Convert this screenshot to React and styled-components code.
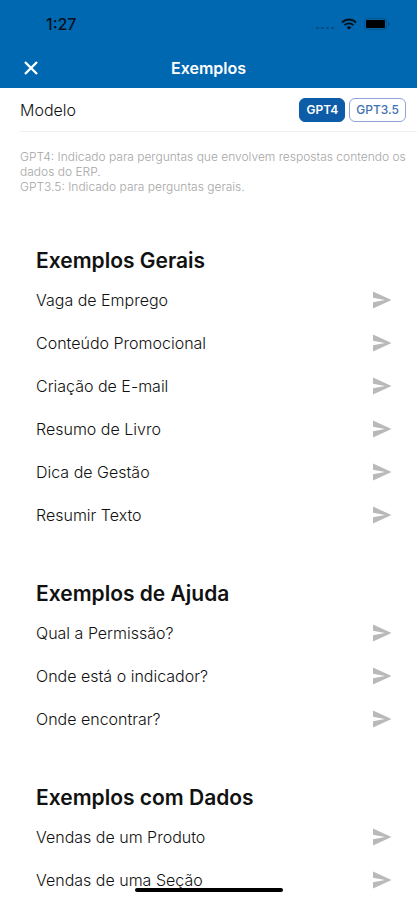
import React, { useState } from "react";
import styled, { createGlobalStyle } from "styled-components";

const GlobalStyle = createGlobalStyle`
  * {
    box-sizing: border-box;
  }

  body {
    margin: 0;
    background: #fff;
    color: #111;
    font-family: Inter, "Liberation Sans", sans-serif;
  }

  button {
    font-family: inherit;
    cursor: pointer;
  }
`;

const Screen = styled.div`
  display: flex;
  flex-direction: column;
  height: 100vh;
`;

const Header = styled.header`
  flex: none;
  background: #0067b1;
`;

const StatusBar = styled.div`
  display: flex;
  align-items: center;
  justify-content: space-between;
  height: 48px;
  padding: 0 27px 0 46px;
  color: #05121c;
`;

const Clock = styled.span`
  font-size: 16px;
  font-weight: 500;
  line-height: 20px;
`;

const StatusIcons = styled.div`
  display: flex;
  align-items: center;
  gap: 7px;

  svg {
    display: block;
  }
`;

const NavBar = styled.div`
  display: grid;
  grid-template-columns: 40px 1fr 40px;
  align-items: center;
  height: 40px;
  padding: 0 11px;
`;

const CloseButton = styled.button`
  display: flex;
  align-items: center;
  justify-content: center;
  height: 40px;
  padding: 0;
  border: none;
  background: none;
  color: #fff;
`;

const Title = styled.h1`
  margin: 0;
  color: #fff;
  font-size: 16px;
  font-weight: 600;
  line-height: 20px;
  text-align: center;
`;

const Content = styled.main`
  flex: 1;
  min-height: 0;
  overflow-y: auto;
  scrollbar-width: none;
`;

const ModelRow = styled.div`
  display: flex;
  align-items: center;
  justify-content: space-between;
  height: 44px;
  margin-left: 20px;
  padding-right: 11px;
  border-bottom: 1px solid #f1f1f1;
`;

const ModelLabel = styled.span`
  font-size: 16px;
  font-weight: 300;
  line-height: 20px;
  color: #111;
`;

const ModelOptions = styled.div`
  display: flex;
  gap: 4px;
`;

const ModelButton = styled.button`
  height: 24px;
  padding: 0 6px;
  border: 1px solid ${({ $active }) => ($active ? "#0d5ca8" : "#8fa3d4")};
  border-radius: 6px;
  background: ${({ $active }) => ($active ? "#0d5ca8" : "#fff")};
  color: ${({ $active }) => ($active ? "#fff" : "#4470b4")};
  font-size: 12px;
  font-weight: ${({ $active }) => ($active ? 600 : 500)};
  line-height: 20px;
`;

const Notes = styled.div`
  padding: 17px 11px 0 20px;
  color: #a6a6a6;
  font-size: 12px;
  font-weight: 300;
  line-height: 15px;

  p {
    margin: 0;
  }
`;

const Sections = styled.div`
  display: flex;
  flex-direction: column;
  gap: 43px;
  padding: 52px 25px 0 36px;
`;

const SectionTitle = styled.h2`
  margin: 0 0 2px;
  color: #111;
  font-size: 21px;
  font-weight: 600;
  line-height: 30px;
`;

const List = styled.ul`
  margin: 0;
  padding: 0;
  list-style: none;
`;

const ExampleButton = styled.button`
  display: flex;
  align-items: center;
  justify-content: space-between;
  width: 100%;
  height: 43px;
  padding: 0;
  border: none;
  background: none;
  color: #111;
  font-size: 16px;
  font-weight: 300;
  line-height: 20px;
  text-align: left;
`;

const HomeIndicator = styled.div`
  position: fixed;
  bottom: 8px;
  left: 50%;
  width: 148px;
  height: 4px;
  border-radius: 2px;
  background: #000;
  transform: translateX(-50%);
`;

const models = ["GPT4", "GPT3.5"];

const sections = [
  {
    title: "Exemplos Gerais",
    items: [
      "Vaga de Emprego",
      "Conteúdo Promocional",
      "Criação de E-mail",
      "Resumo de Livro",
      "Dica de Gestão",
      "Resumir Texto",
    ],
  },
  {
    title: "Exemplos de Ajuda",
    items: ["Qual a Permissão?", "Onde está o indicador?", "Onde encontrar?"],
  },
  {
    title: "Exemplos com Dados",
    items: ["Vendas de um Produto", "Vendas de uma Seção"],
  },
];

const SignalIcon = () => (
  <svg width="19" height="12" viewBox="0 0 19 12" fill="#064a80" aria-hidden="true">
    <rect x="1" y="9" width="3" height="2" rx="1" />
    <rect x="6" y="9" width="3" height="2" rx="1" />
    <rect x="11" y="9" width="3" height="2" rx="1" />
    <rect x="16" y="9" width="3" height="2" rx="1" />
  </svg>
);

const WifiIcon = () => (
  <svg width="16" height="12" viewBox="0 0 16 12" fill="none" aria-hidden="true">
    <path d="M.9 4.4a10.4 10.4 0 0 1 14.2 0" stroke="currentColor" strokeWidth="2" />
    <path d="M3.5 7.2a6.6 6.6 0 0 1 9 0" stroke="currentColor" strokeWidth="1.8" />
    <path d="M5.7 9.3a3.5 3.5 0 0 1 4.6 0L8 11.8z" fill="currentColor" />
  </svg>
);

const BatteryIcon = () => (
  <svg width="26" height="12" viewBox="0 0 26 12" aria-hidden="true">
    <rect x=".5" y=".5" width="22" height="11" rx="3" fill="none" stroke="#06528c" />
    <rect x="2" y="2" width="19" height="8" rx="1" fill="#000" />
    <path d="M24 4v4c.9-.3 1.5-1.1 1.5-2S24.900 4.300 24 4z" fill="#06528c" />
  </svg>
);

const CloseIcon = () => (
  <svg width="14" height="14" viewBox="0 0 14 14" fill="none" aria-hidden="true">
    <path d="M1 1l12 12M13 1L1 13" stroke="currentColor" strokeWidth="2.4" />
  </svg>
);

const SendIcon = () => (
  <svg width="20" height="18" viewBox="0 0 20 18" aria-hidden="true">
    <path d="M1 .6L19.500 9 1 17.400V11.200L13 9 1 6.800z" fill="#b9b9b9" />
  </svg>
);

function App() {
  const [model, setModel] = useState("GPT4");

  return (
    <>
      <GlobalStyle />
      <Screen>
        <Header>
          <StatusBar>
            <Clock>1:27</Clock>
            <StatusIcons>
              <SignalIcon />
              <WifiIcon />
              <BatteryIcon />
            </StatusIcons>
          </StatusBar>
          <NavBar>
            <CloseButton type="button" aria-label="Fechar">
              <CloseIcon />
            </CloseButton>
            <Title>Exemplos</Title>
          </NavBar>
        </Header>
        <Content>
          <ModelRow>
            <ModelLabel id="model-label">Modelo</ModelLabel>
            <ModelOptions role="group" aria-labelledby="model-label">
              {models.map((name) => (
                <ModelButton
                  key={name}
                  type="button"
                  $active={model === name}
                  aria-pressed={model === name}
                  onClick={() => setModel(name)}
                >
                  {name}
                </ModelButton>
              ))}
            </ModelOptions>
          </ModelRow>
          <Notes>
            <p>
              GPT4: Indicado para perguntas que envolvem respostas contendo os
              dados do ERP.
            </p>
            <p>GPT3.5: Indicado para perguntas gerais.</p>
          </Notes>
          <Sections>
            {sections.map(({ title, items }) => (
              <section key={title}>
                <SectionTitle>{title}</SectionTitle>
                <List>
                  {items.map((item) => (
                    <li key={item}>
                      <ExampleButton type="button">
                        {item}
                        <SendIcon />
                      </ExampleButton>
                    </li>
                  ))}
                </List>
              </section>
            ))}
          </Sections>
        </Content>
      </Screen>
      <HomeIndicator />
    </>
  );
}

export default App;
